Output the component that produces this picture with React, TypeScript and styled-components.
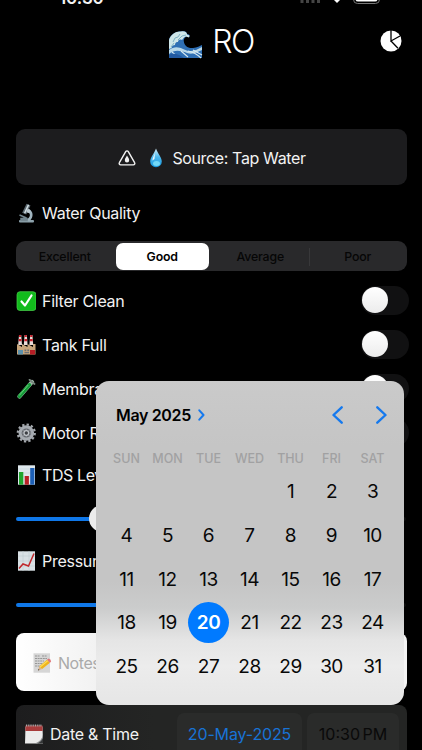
import React from 'react';
import styled, { createGlobalStyle } from 'styled-components';

const GlobalStyle = createGlobalStyle`
  html, body { margin: 0; background: #000; }
  * { box-sizing: border-box; }
  button { border: 0; padding: 0; margin: 0; background: none; font: inherit; color: inherit; }
`;

const Screen = styled.main`
  position: relative;
  width: 422px;
  height: 750px;
  overflow: hidden;
  background: #000;
  color: #f2f2f2;
  font-family: Inter, 'Liberation Sans', sans-serif;
  font-size: 16px;
  padding: 0 15px 0 16px;
`;

const StatusBar = styled.div`
  height: 5px;
  display: flex;
  align-items: flex-end;
  justify-content: space-between;
  padding: 0 26px 0 43px;
`;

const Clock = styled.span`
  font-size: 17px;
  font-weight: 600;
  line-height: 12px;
  height: 13px;
  letter-spacing: -0.3px;
`;

const StatusIcons = styled.svg`
  width: 82px;
  height: 14px;
  flex: none;
`;

const Header = styled.header`
  height: 124px;
  padding-top: 18px;
  display: grid;
  grid-template-columns: 1fr auto 1fr;
  align-items: start;
`;

const Title = styled.h1`
  grid-column: 2;
  margin: 0;
  height: 38px;
  display: flex;
  align-items: center;
  gap: 9px;
  font-size: 32px;
  font-weight: 350;
  line-height: 38px;
  letter-spacing: -1.5px;
  color: #fff;
  svg { margin-top: 5px; }
`;

const ChartButton = styled.button`
  justify-self: end;
  width: 22px;
  height: 22px;
  margin: 7px 5px 0 0;
  svg { display: block; }
`;

const SourceButton = styled.button`
  width: 100%;
  height: 56px;
  border-radius: 9px;
  background: #1c1c1e;
  display: flex;
  align-items: center;
  justify-content: center;
  gap: 8px;
  padding: 1px 0 0 1px;
  letter-spacing: -0.37px;
  && { color: #f2f2f2; }
  svg:first-child { margin-right: 4px; }
`;

const Row = styled.div<{ $h: number }>`
  height: ${p => p.$h}px;
  display: flex;
  align-items: center;
  justify-content: space-between;
`;

const Label = styled.div<{ $track?: number }>`
  display: flex;
  align-items: center;
  gap: 6px;
  letter-spacing: ${p => p.$track ?? -0.28}px;
  white-space: nowrap;
`;

const Segments = styled.div`
  height: 30px;
  border-radius: 9px;
  background: #29292b;
  display: grid;
  grid-template-columns: 97.500px 97.500px 98.500px 1fr;
  padding: 2px 1px 1px 0;
  font-size: 12.300px;
`;

const Segment = styled.button<{ $on?: boolean; $rule?: boolean }>`
  border-radius: ${p => (p.$rule ? 0 : 7)}px;
  margin: ${p => (p.$rule ? 0 : '0 2px')};
  background: ${p =>
    p.$on ? '#fff' : p.$rule ? 'linear-gradient(#38383a, #38383a) right center / 1px 18px no-repeat' : 'transparent'};
  font-weight: ${p => (p.$on ? 600 : 500)};
  letter-spacing: -0.12px;
  && { color: ${p => (p.$on ? '#000' : '#060606')}; }
`;

const Toggle = styled.div`
  width: 48px;
  height: 29px;
  margin: -2px -2px 0 0;
  border-radius: 15px;
  background: #111112;
  padding: 1.500px 1px;
`;

const Knob = styled.div`
  width: 26px;
  height: 26px;
  border-radius: 50%;
  background: linear-gradient(#fff, #ececec);
`;

const SliderRow = styled.div<{ $h: number }>`
  height: ${p => p.$h}px;
  display: flex;
  align-items: center;
`;

const Filled = styled.div<{ $w: number }>`
  width: ${p => p.$w}px;
  height: 4px;
  border-radius: 2px;
  background: #0f77e8;
`;

const Rest = styled.div`
  flex: 1;
  height: 4px;
  margin-right: 1px;
  border-radius: 2px;
  background: #0d0e0d;
`;

const Thumb = styled.div`
  width: 27px;
  height: 27px;
  margin: 0 -2px;
  border-radius: 50%;
  background: #ececec;
`;

const Notes = styled.div`
  height: 58px;
  border-radius: 8px;
  background: linear-gradient(90deg, #fff, #efefef 25%, #f4f4f4);
  color: #aaa;
  display: flex;
  align-items: center;
  padding: 2px 0 0 16px;
`;

const DateRow = styled.div`
  height: 60px;
  margin-top: 14px;
  border-radius: 8px 8px 0 0;
  background: linear-gradient(90deg, #1d1d1e, #242524 35%);
  padding: 8px 8px 0 8px;
  display: flex;
  align-items: flex-start;
  gap: 5px;
`;

const DateLabel = styled(Label)`
  flex: 1;
  height: 42px;
`;

const Chip = styled.div<{ $w: number; $blue?: boolean }>`
  width: ${p => p.$w}px;
  height: 52px;
  border-radius: 7px;
  background: #2a2b2a;
  color: ${p => (p.$blue ? '#1873d6' : '#090909')};
  text-align: center;
  line-height: 42px;
  white-space: nowrap;
  letter-spacing: ${p => (p.$blue ? -0.15 : 0)}px;
  word-spacing: -2px;
`;

const Popover = styled.section`
  position: absolute;
  left: 96px;
  top: 381px;
  width: 307.5px;
  height: 323.5px;
  border-radius: 13px;
  padding: 0 10.5px 0 10px;
  color: #080808;
  background: linear-gradient(#cacaca 0, #c5c5c5 20%, #c5c5c5 62%, #cbcccc 70%, #e5e5e5 80%, #ececec 88%, #e6e6e6);
`;

const MonthBar = styled.div`
  height: 67px;
  display: flex;
  align-items: center;
  padding: 0 6px 0 10px;
`;

const Month = styled.div`
  flex: 1;
  display: flex;
  align-items: center;
  gap: 7px;
  font-weight: 600;
  letter-spacing: -0.35px;
  color: #000;
  padding-top: 1px;
`;

const Arrows = styled.div`
  display: flex;
  gap: 33px;
  svg { display: block; }
`;

const Grid = styled.div`
  display: grid;
  grid-template-columns: repeat(7, 41px);
`;

const Weekday = styled.div`
  height: 21px;
  line-height: 21px;
  text-align: center;
  font-size: 12.5px;
  font-weight: 550;
  color: #a1a1a2;
  letter-spacing: 0;
`;

const Days = styled(Grid)`
  padding-top: 0.6px;
  grid-auto-rows: 43.8px;
  align-items: center;
`;

const Day = styled.div<{ $on?: boolean; $start?: number }>`
  height: 41px;
  line-height: 41px;
  border-radius: 50%;
  text-align: center;
  font-size: 19px;
  letter-spacing: -0.5px;
  font-weight: ${p => (p.$on ? 600 : 400)};
  color: ${p => (p.$on ? '#fff' : '#080808')};
  background: ${p => (p.$on ? '#007aff' : 'transparent')};
  ${p => p.$start && `grid-column-start: ${p.$start};`}
`;

const WaveArt = () => (
  <svg width="34" height="29" viewBox="0 0 34 29">
    <path d="M0 28V9C3 3 8 1 13 1.500c3-.8 5 .5 5 2.500 2 0 3 1 2.500 3l-3-.5c-2 1-3.500 3-2.500 6 1 4 5 6 9 5.500 4-.3 7-2 9-3V28Z" fill="#2f6fb4" />
    <path d="M0 10C2 4 7 1 12 1.500c4-.7 6 1 6 3l2.500 1-.5 2-3-1c-2 .5-3 2-4 3.500-2-1-4 0-4 2-2-.5-3 1-3 3-2 0-3 1-3.500 3L0 19Z" fill="#cfe6e8" />
    <path d="M4 12l2-4 3-1 2-3M2 17l3-4M9 10l4-4 4-1" fill="none" stroke="#7fb2c4" strokeWidth="1" />
    <path d="M0 20c5-4 10-3 14-1s8 3 13 1l6-3v3c-5 2-9 5-15 3S6 19 0 24Z" fill="#b9d8e8" />
    <path d="M12 21l7 6M19 21c5 1 9 3 13 7M24 20l9 5M3 22l6 5" stroke="#d7eaf2" strokeWidth="1.100" fill="none" />
    <path d="M0 25c5-3 11 0 15 3H0Z" fill="#2259a0" />
  </svg>
);

const PieArt = () => (
  <svg width="22" height="22" viewBox="0 0 22 22">
    <circle cx="11" cy="11" r="10.500" fill="#fff" />
    <path d="M11 0v11l9-5M11 11l7 7.300" fill="none" stroke="#000" strokeWidth="1.300" />
  </svg>
);

const TriangleDrop = () => (
  <svg width="18" height="16" viewBox="0 0 18 16">
    <path d="M7.700 1.600a1.500 1.500 0 0 1 2.600 0l6.300 11a1.500 1.500 0 0 1-1.300 2.300H2.700a1.500 1.500 0 0 1-1.300-2.300Z" fill="none" stroke="#f2f2f2" strokeWidth="1.400" />
    <path d="M9 5.500c1.200 2 2.200 3.300 2.200 4.700a2.200 2.200 0 0 1-4.400 0C6.800 8.800 7.800 7.500 9 5.500Z" fill="#f2f2f2" />
  </svg>
);

const Drop = () => (
  <svg width="16" height="20" viewBox="0 0 16 20">
    <defs>
      <linearGradient id="drop" x1="0" y1="0" x2="0" y2="1">
        <stop offset="0" stopColor="#d8f2fc" />
        <stop offset=".45" stopColor="#4db8ec" />
        <stop offset="1" stopColor="#1699e0" />
      </linearGradient>
    </defs>
    <path d="M8 0.500C10 6 13.800 9.500 13.800 13.500A5.800 5.800 0 0 1 2.200 13.500C2.200 9.500 6 6 8 .5Z" fill="url(#drop)" />
    <ellipse cx="8.500" cy="15.500" rx="3.500" ry="2.500" fill="#72d8f6" />
    <path d="M7 5c-1 3-2.600 5-2.600 7.500L6.500 11Z" fill="#e8f8fe" />
  </svg>
);

const Microscope = () => (
  <svg width="20" height="20" viewBox="0 0 20 20">
    <rect x="3" y="17" width="15" height="2.500" rx="1" fill="#8ea3ad" />
    <path d="M13.500 6.500c4 2 4 8 .5 11H10l3-3c1.500-2 1-4-.5-5Z" fill="#9fb4be" />
    <path d="M10.500.8l4 1.700-4.300 9-4-1.700Z" fill="#5b6870" />
    <path d="M11.800 1.500l1.500.6-4 8.500-1.400-.6Z" fill="#d1dce0" />
    <circle cx="12.500" cy="8" r="2" fill="#bdcbd2" />
    <path d="M3.500 12l7 3M5 15.500h6v2H5Z" stroke="#73868f" strokeWidth="1.500" fill="#73868f" />
  </svg>
);

const CheckArt = () => (
  <svg width="20" height="20" viewBox="0 0 20 20">
    <rect x="1" y=".7" width="19" height="18.800" rx="3" fill="#12bb1c" stroke="#4bd24e" strokeWidth=".7" />
    <path d="M5.500 10.500l3.500 4 6.500-10" fill="none" stroke="#fff" strokeWidth="2.200" strokeLinecap="round" strokeLinejoin="round" />
  </svg>
);

const FactoryArt = () => (
  <svg width="20" height="20" viewBox="0 0 20 20">
    {[3, 8.600, 14.200].map(x => (
      <g key={x}>
        <path d={`M${x} 0h2.200l.8 10h-3.800Z`} fill="#e9dcd8" />
        <path d={`M${x} 0h2.200v2H${x}ZM${x - 0.2} 4h2.700v2.200h-2.800Z`} fill="#c8202b" />
      </g>
    ))}
    <path d="M1 19.500V9l5 3V9l5.500 3V9l5.500 3V9h2.500v10.500Z" fill="#c8a67c" />
    <path d="M2 15h5v4.500H2Z" fill="#5d91ab" />
    <path d="M14 15h5v4.500h-5Z" fill="#b51d25" />
    <path d="M8.500 14.500h1.800v1.800H8.500ZM11.300 14.500h1.800v1.800h-1.800ZM8.500 17h4.600v1.200H8.500Z" fill="#6b7076" />
  </svg>
);

const TubeArt = () => (
  <svg width="20" height="20" viewBox="0 0 20 20">
    <path d="M16 3L3.500 17.500" stroke="#a3b9ab" strokeWidth="4.200" strokeLinecap="round" />
    <path d="M13.500 5.800L3.500 17.300" stroke="#159a38" strokeWidth="3.600" strokeLinecap="round" />
    <path d="M12 6.300l-8.500 9.900" stroke="#67d478" strokeWidth="1" strokeLinecap="round" />
    <path d="M13.500.8l5 4.200" stroke="#77867d" strokeWidth="1.800" strokeLinecap="round" />
  </svg>
);

const GearArt = () => (
  <svg width="20" height="20" viewBox="0 0 20 20">
    <circle cx="10.300" cy="10" r="8.500" fill="none" stroke="#a4a8ad" strokeWidth="2.200" strokeDasharray="2.300 2.150" />
    <circle cx="10.300" cy="10" r="6.200" fill="#63666c" stroke="#a6abb1" strokeWidth="3.200" />
    <path d="M10.300 5v10M5.300 10h10M6.800 6.600l7 6.800M13.800 6.600l-7 6.800" stroke="#868b92" strokeWidth="1.200" />
    <circle cx="10.300" cy="10" r="2.300" fill="#3b3e43" stroke="#c3c7cc" strokeWidth="1.200" />
  </svg>
);

const BarsArt = () => (
  <svg width="20" height="20" viewBox="0 0 20 20">
    <rect x="2" y=".3" width="17" height="19.400" fill="#dfe8ed" />
    <path d="M2 4h17M2 8h17M2 12h17" stroke="#c4d1d8" strokeWidth=".6" />
    <rect x="3" y="7" width="4.300" height="12.700" fill="#20a52e" />
    <rect x="8.700" y="11" width="4.200" height="8.700" fill="#b92026" />
    <rect x="14.200" y="3" width="4.200" height="16.700" fill="#1d5fb5" />
  </svg>
);

const TrendArt = () => (
  <svg width="20" height="20" viewBox="0 0 20 20">
    <rect x="2" y=".3" width="17" height="19.400" fill="#d9e1e5" />
    <path d="M2 5h17M2 10h17M2 15h17M7 0v20M13 0v20" stroke="#c1ccd2" strokeWidth=".6" />
    <path d="M3 17.500l4-4.500 5.500 2L18 2.500" fill="none" stroke="#c1282c" strokeWidth="1.500" />
  </svg>
);

const MemoArt = () => (
  <svg width="20" height="20" viewBox="0 0 20 20">
    <rect x="1.500" y=".3" width="16.500" height="19.400" fill="#d6d6d6" />
    <path d="M3 3h5M10 3h5M3 5.500h12M3 8h9M3 10.500h8M3 13h5" stroke="#909090" strokeWidth=".9" strokeDasharray="2 .6" />
    <path d="M6 17.500l1.300-4.300 2.800 2.800Z" fill="#d9b38a" />
    <path d="M7.300 13.200L15 6.700l3 3-7.900 6.300Z" fill="#eeb41c" />
    <path d="M8 14l8-6.500" stroke="#ffdc54" strokeWidth="1.100" />
    <path d="M15 6.700l1.500-1.200q2.500.7 2.600 3L18 9.700Z" fill="#e07779" />
    <path d="M6 17.500l.5-1.500 1 1Z" fill="#333" />
  </svg>
);

const CalendarArt = () => (
  <svg width="20" height="20" viewBox="0 0 20 20">
    <path d="M1.500 2.500h17l.5 17H1Z" fill="#ececec" />
    <path d="M1.500 1.500h17l.2 5.500H1.300Z" fill="#a83c3c" />
    <path d="M2 1.500h16" stroke="#a9a9a9" strokeWidth="2" strokeDasharray="1 .8" />
    <path d="M19 11c-1 4-3.500 7-8 8.500h8Z" fill="#8b8d8e" />
    <path d="M19 14c-1.500 3-3 4.500-6 5.500h6Z" fill="#343637" />
  </svg>
);

const Chevron = ({ w, h, left, stroke }: { w: number; h: number; left?: boolean; stroke: number }) => (
  <svg width={w} height={h} viewBox={`0 0 ${w} ${h}`}>
    <path
      d={left ? `M${w - 1.3} 1.300L1.500 ${h / 2}L${w - 1.3} ${h - 1.3}` : `M1.300 1.300L${w - 1.5} ${h / 2}L1.300 ${h - 1.3}`}
      fill="none" stroke="#1579ee" strokeWidth={stroke} strokeLinecap="round" strokeLinejoin="round"
    />
  </svg>
);

const toggles = [
  { name: 'Filter Clean', art: <CheckArt /> },
  { name: 'Tank Full', art: <FactoryArt /> },
  { name: 'Membrane', art: <TubeArt /> },
  { name: 'Motor Running', art: <GearArt /> },
];
const weekdays = ['SUN', 'MON', 'TUE', 'WED', 'THU', 'FRI', 'SAT'];
const days = Array.from({ length: 31 }, (_, i) => i + 1);

export default function App() {
  return (
    <>
      <GlobalStyle />
      <Screen>
        <StatusBar>
          <Clock>10:30</Clock>
          <StatusIcons viewBox="0 0 82 14">
            <path d="M3 9v3M8.500 9v3M14 9v3M19.500 9v3" stroke="#444" strokeWidth="3" />
            <path d="M34 8h8l-4 4Z" fill="#fff" />
            <rect x="54.500" y="0" width="26" height="12.500" rx="4" fill="none" stroke="#777" />
            <rect x="56.500" y="2" width="22" height="8.600" rx="2.500" fill="#fff" />
          </StatusIcons>
        </StatusBar>

        <Header>
          <Title><WaveArt />RO</Title>
          <ChartButton aria-label="Statistics"><PieArt /></ChartButton>
        </Header>

        <SourceButton><TriangleDrop /><Drop /><span>Source: Tap Water</span></SourceButton>

        <Row $h={56}><Label><Microscope />Water Quality</Label></Row>

        <Segments>
          <Segment>Excellent</Segment>
          <Segment $on>Good</Segment>
          <Segment $rule>Average</Segment>
          <Segment>Poor</Segment>
        </Segments>

        <Row $h={8} />
        {toggles.map(t => (
          <Row $h={44} key={t.name}>
            <Label>{t.art}{t.name}</Label>
            <Toggle><Knob /></Toggle>
          </Row>
        ))}

        <Row $h={40}><Label $track={-0.4}><BarsArt />TDS Level</Label></Row>
        <SliderRow $h={47}><Filled $w={75} /><Thumb /><Rest /></SliderRow>
        <Row $h={38}><Label><TrendArt />Pressure</Label></Row>
        <SliderRow $h={49}><Filled $w={160} /><Thumb /><Rest /></SliderRow>

        <Row $h={4} />
        <Notes><Label $track={-0.45}><MemoArt />Notes</Label></Notes>

        <DateRow>
          <DateLabel><CalendarArt />Date &amp; Time</DateLabel>
          <Chip $w={125} $blue>20-May-2025</Chip>
          <Chip $w={92}>10:30 PM</Chip>
        </DateRow>

        <Popover>
          <MonthBar>
            <Month>May 2025<Chevron w={7} h={12} stroke={2} /></Month>
            <Arrows>
              <Chevron w={11} h={18} left stroke={2.4} />
              <Chevron w={11} h={18} stroke={2.4} />
            </Arrows>
          </MonthBar>
          <Grid>{weekdays.map(d => <Weekday key={d}>{d}</Weekday>)}</Grid>
          <Days>
            {days.map(d => <Day key={d} $on={d === 20} $start={d === 1 ? 5 : undefined}>{d}</Day>)}
          </Days>
        </Popover>
      </Screen>
    </>
  );
}
